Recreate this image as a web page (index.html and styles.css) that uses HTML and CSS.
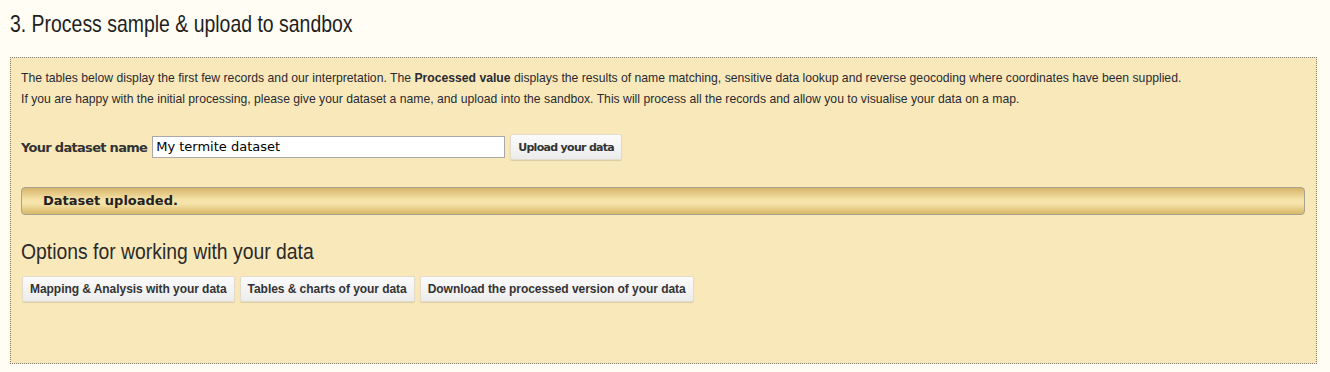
FILE: index.html
```html
<!DOCTYPE html>
<html lang="en">
<head>
    <meta charset="UTF-8">
    <title>Process sample &amp; upload to sandbox</title>
    <link rel="stylesheet" href="styles.css">
</head>
<body>
    <h1 class="step-title">3. Process sample &amp; upload to sandbox</h1>
    <div class="step-box">
        <p class="intro">The tables below display the first few records and our interpretation. The <strong>Processed value</strong> displays the results of name matching, sensitive data lookup and reverse geocoding where coordinates have been supplied.</p>
        <p class="intro">If you are happy with the initial processing, please give your dataset a name, and upload into the sandbox. This will process all the records and allow you to visualise your data on a map.</p>

        <form class="upload-form">
            <label for="dataset-name">Your dataset name</label>
            <input type="text" id="dataset-name" value="My termite dataset">
            <button type="button" class="upload-button">Upload your data</button>
        </form>

        <div class="status-bar">Dataset uploaded.</div>

        <h2 class="options-title">Options for working with your data</h2>
        <div class="option-buttons">
            <button type="button">Mapping &amp; Analysis with your data</button>
            <button type="button">Tables &amp; charts of your data</button>
            <button type="button">Download the processed version of your data</button>
        </div>
    </div>
</body>
</html>
```

FILE: styles.css
```css
body {
    margin: 0;
    padding: 0 13px 9px 10px;
    background-color: #fffdf4;
    font-family: "Liberation Sans", Arial, sans-serif;
    color: #222222;
}
/* headings use a condensed face on the original, squeeze the sans to match */
.step-title {
    margin: 0;
    padding: 9px 0 0 0;
    height: 57px;
    box-sizing: border-box;
    font-size: 24px;
    font-weight: normal;
    line-height: 30px;
    color: #1e1e1e;
    transform: scaleX(0.81);
    transform-origin: left top;
}
.step-box {
    height: 307px;
    box-sizing: border-box;
    padding: 10px 10px 0 10px;
    border: 1px dotted #8a8070;
    background-color: #f9e9ba;
}
.intro {
    margin: 0;
    font-size: 12.2px;
    line-height: 21px;
    color: #2a2a33;
}
.upload-form {
    display: flex;
    align-items: center;
    margin-top: 24px;
    height: 26px;
}
.upload-form label {
    font-family: "DejaVu Sans", Verdana, sans-serif;
    font-size: 13px;
    font-weight: bold;
    letter-spacing: -0.7px;
    color: #333333;
    margin-right: 5px;
}
.upload-form input {
    width: 353px;
    height: 22px;
    box-sizing: border-box;
    margin: 0 0 1px 0;
    padding: 0 3px;
    border: 1px solid #a9a9a9;
    font-family: "DejaVu Sans", Verdana, sans-serif;
    font-size: 13px;
    color: #000000;
    background-color: #ffffff;
}
button {
    height: 26px;
    box-sizing: border-box;
    margin: 0;
    padding: 0 7px;
    border: 1px solid #e4dccb;
    border-radius: 2px;
    background: linear-gradient(#fbfbfb, #ececec);
    box-shadow: 0 1px 1px rgba(0, 0, 0, 0.12);
    color: #333333;
    font-weight: bold;
}
.upload-button {
    margin-left: 5px;
    font-family: "DejaVu Sans", Verdana, sans-serif;
    font-size: 11px;
    letter-spacing: -0.7px;
}
.status-bar {
    margin-top: 27px;
    margin-right: 1px;
    height: 28px;
    box-sizing: border-box;
    padding: 0 21px;
    border: 1px solid #a8a294;
    border-radius: 4px;
    background: linear-gradient(#d6b56a, #f6e3a9 45%, #f6e3a9 60%, #d8b868);
    font-family: "DejaVu Sans", Verdana, sans-serif;
    font-size: 13px;
    font-weight: bold;
    line-height: 26px;
    color: #222222;
}
.options-title {
    margin: 23px 0 0 0;
    font-size: 22px;
    font-weight: normal;
    line-height: 28px;
    color: #2a2a2a;
    transform: scaleX(0.88);
    transform-origin: left top;
}
.option-buttons {
    display: flex;
    gap: 5px;
    margin-top: 10px;
    padding-left: 1px;
}
.option-buttons button {
    font-size: 12px;
    letter-spacing: -0.05px;
}
```
